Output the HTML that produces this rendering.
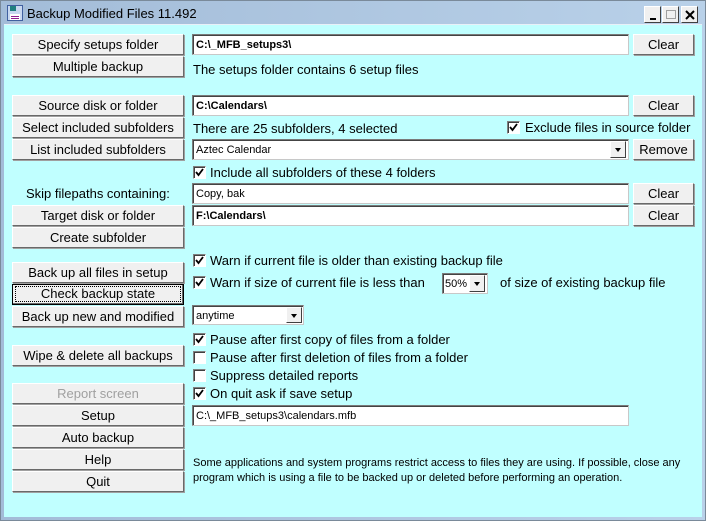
<!DOCTYPE html>
<html><head><meta charset="utf-8"><style>
*{margin:0;padding:0;box-sizing:border-box}
body{width:706px;height:521px;overflow:hidden;background:#dfe6ee;font-family:"Liberation Sans",Arial,sans-serif;position:relative}
#win{position:absolute;left:0;top:0;width:706px;height:521px;border:1px solid #7a8a9a;background:linear-gradient(90deg,#a3bcd8,#b9d1e9)}
#client{position:absolute;left:4px;top:24px;width:698px;height:493px;background:#c0ffff;border-top:1px solid #e8f0f8}
.a{position:absolute}
.btn{position:absolute;background:#f0f0f0;border-top:1px solid #fff;border-left:1px solid #fff;border-right:1px solid #696969;border-bottom:1px solid #696969;box-shadow:1px 1px 0 #a0a0a0;font-size:13px;text-align:center;line-height:19px;color:#000}
.lb{left:12px;width:172px;height:21px}
.inp{position:absolute;background:#fff;border-top:1px solid #7a7a7a;border-left:1px solid #7a7a7a;border-right:1px solid #c8c8c8;border-bottom:1px solid #c8c8c8;box-shadow:inset 1px 1px 0 #444;font-size:11px;line-height:19px;padding-left:3px;padding-top:1px;height:21px}
.b{font-weight:bold}
.t{position:absolute;font-size:13px;color:#000;white-space:nowrap}
.cb{position:absolute;width:13px;height:13px;background:#fff;border-top:1px solid #808080;border-left:1px solid #808080;border-right:1px solid #fff;border-bottom:1px solid #fff;box-shadow:inset 1px 1px 0 #404040}
.cb svg{position:absolute;left:1px;top:1px}
.dd{position:absolute;width:16px;background:#f0f0f0;border-top:1px solid #fff;border-left:1px solid #fff;border-right:1px solid #404040;border-bottom:1px solid #404040}
.dd:after{content:"";position:absolute;left:4px;top:6px;border-left:3.5px solid transparent;border-right:3.5px solid transparent;border-top:4px solid #000}
.tb{position:absolute;top:5px;width:17px;height:17px;background:#f0f0f0;border-top:1px solid #fff;border-left:1px solid #fff;border-right:1px solid #404040;border-bottom:1px solid #404040}
</style></head><body>
<div id="win">
<svg class="a" style="left:6px;top:4px" width="16" height="16" viewBox="0 0 16 16"><rect x="0.5" y="0.5" width="15" height="15" fill="#c8d8f0" stroke="#4060a0"/><rect x="3" y="1" width="6" height="5" fill="#208080"/><rect x="3" y="9" width="10" height="6" fill="#fff"/><rect x="4" y="11" width="8" height="1" fill="#902090"/><rect x="4" y="13" width="8" height="1" fill="#902090"/></svg>
<div class="t" style="left:26px;top:5px;font-size:13px">Backup Modified Files 11.492</div>
<div class="tb" style="left:643px"><div class="a" style="left:5px;top:11px;width:6px;height:2px;background:#000"></div></div>
<div class="tb" style="left:661px"><div class="a" style="left:3px;top:3px;width:10px;height:9px;border:1px solid #a0a0a0"></div></div>
<div class="tb" style="left:680px"><svg class="a" style="left:3px;top:3px" width="10" height="10"><path d="M1 1L9 9M9 1L1 9" stroke="#000" stroke-width="2"/></svg></div>
</div>
<div id="client"></div>

<div class="btn lb" style="top:34px">Specify setups folder</div>
<div class="btn lb" style="top:56px">Multiple backup</div>
<div class="btn lb" style="top:95px">Source disk or folder</div>
<div class="btn lb" style="top:117px">Select included subfolders</div>
<div class="btn lb" style="top:139px">List included subfolders</div>
<div class="t" style="left:26px;top:186px">Skip filepaths containing:</div>
<div class="btn lb" style="top:205px">Target disk or folder</div>
<div class="btn lb" style="top:227px">Create subfolder</div>
<div class="btn lb" style="top:262px">Back up all files in setup</div>
<div class="btn lb" style="top:284px;border:1px solid #000;box-shadow:inset -1px -1px 0 #696969"><div class="a" style="left:3px;top:2px;right:3px;bottom:3px;outline:1px dotted #000;line-height:14px">Check backup state</div></div>
<div class="btn lb" style="top:306px">Back up new and modified</div>
<div class="btn lb" style="top:345px">Wipe &amp; delete all backups</div>
<div class="btn lb" style="top:383px;color:#a0a0a0">Report screen</div>
<div class="btn lb" style="top:405px">Setup</div>
<div class="btn lb" style="top:427px">Auto backup</div>
<div class="btn lb" style="top:449px">Help</div>
<div class="btn lb" style="top:471px">Quit</div>

<div class="inp b" style="left:192px;top:34px;width:437px">C:\_MFB_setups3\</div>
<div class="btn" style="left:633px;top:34px;width:61px;height:21px">Clear</div>
<div class="t" style="left:193px;top:62px">The setups folder contains 6 setup files</div>

<div class="inp b" style="left:192px;top:95px;width:437px">C:\Calendars\</div>
<div class="btn" style="left:633px;top:95px;width:61px;height:21px">Clear</div>
<div class="t" style="left:193px;top:121px">There are 25 subfolders, 4 selected</div>
<div class="cb" style="left:507px;top:121px"><svg width="9" height="9"><path d="M1 4L3.5 7L8 1" stroke="#000" stroke-width="1.8" fill="none"/></svg></div>
<div class="t" style="left:525px;top:120px">Exclude files in source folder</div>

<div class="inp" style="left:192px;top:139px;width:437px">Aztec Calendar</div>
<div class="dd" style="left:610px;top:141px;height:17px"></div>
<div class="btn" style="left:633px;top:139px;width:61px;height:21px">Remove</div>

<div class="cb" style="left:193px;top:166px"><svg width="9" height="9"><path d="M1 4L3.5 7L8 1" stroke="#000" stroke-width="1.8" fill="none"/></svg></div>
<div class="t" style="left:210px;top:165px">Include all subfolders of these 4 folders</div>

<div class="inp" style="left:192px;top:183px;width:437px">Copy, bak</div>
<div class="btn" style="left:633px;top:183px;width:61px;height:21px">Clear</div>
<div class="inp b" style="left:192px;top:205px;width:437px">F:\Calendars\</div>
<div class="btn" style="left:633px;top:205px;width:61px;height:21px">Clear</div>

<div class="cb" style="left:193px;top:254px"><svg width="9" height="9"><path d="M1 4L3.5 7L8 1" stroke="#000" stroke-width="1.8" fill="none"/></svg></div>
<div class="t" style="left:210px;top:253px">Warn if current file is older than existing backup file</div>
<div class="cb" style="left:193px;top:276px"><svg width="9" height="9"><path d="M1 4L3.5 7L8 1" stroke="#000" stroke-width="1.8" fill="none"/></svg></div>
<div class="t" style="left:210px;top:275px">Warn if size of current file is less than</div>
<div class="inp" style="left:442px;top:273px;width:46px;height:21px;padding-left:2px">50%</div>
<div class="dd" style="left:469px;top:275px;height:17px"></div>
<div class="t" style="left:500px;top:275px">of size of existing backup file</div>

<div class="inp" style="left:192px;top:305px;width:112px;height:20px;line-height:18px">anytime</div>
<div class="dd" style="left:286px;top:307px;height:16px"></div>

<div class="cb" style="left:193px;top:333px"><svg width="9" height="9"><path d="M1 4L3.5 7L8 1" stroke="#000" stroke-width="1.8" fill="none"/></svg></div>
<div class="t" style="left:210px;top:332px">Pause after first copy of files from a folder</div>
<div class="cb" style="left:193px;top:351px"></div>
<div class="t" style="left:210px;top:350px">Pause after first deletion of files from a folder</div>
<div class="cb" style="left:193px;top:369px"></div>
<div class="t" style="left:210px;top:368px">Suppress detailed reports</div>
<div class="cb" style="left:193px;top:387px"><svg width="9" height="9"><path d="M1 4L3.5 7L8 1" stroke="#000" stroke-width="1.8" fill="none"/></svg></div>
<div class="t" style="left:210px;top:386px">On quit ask if save setup</div>

<div class="inp" style="left:192px;top:405px;width:437px">C:\_MFB_setups3\calendars.mfb</div>

<div class="t" style="left:193px;top:456px;font-size:11px;line-height:15px">Some applications and system programs restrict access to files they are using. If possible, close any<br>program which is using a file to be backed up or deleted before performing an operation.</div>
</body></html>
